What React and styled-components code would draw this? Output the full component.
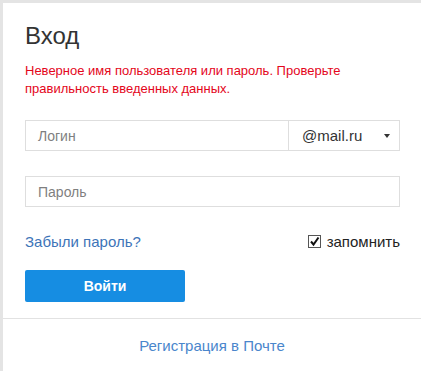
import React from "react";
import styled, { createGlobalStyle } from "styled-components";

const GlobalStyle = createGlobalStyle`
  html, body {
    margin: 0;
    padding: 0;
    background: #e4e4e4;
    font-family: "Liberation Sans", Arial, sans-serif;
  }
`;

const Card = styled.div`
  margin: 3px 0 0 3px;
  width: 418px;
  height: 368px;
  background: #fff;
  display: flex;
  flex-direction: column;
`;

const Body = styled.div`
  padding: 19px 21px 0 22px;
  display: flex;
  flex-direction: column;
`;

const Title = styled.h1`
  margin: 0;
  font-size: 24px;
  font-weight: normal;
  line-height: 28px;
  color: #333;
`;

const Error = styled.p`
  margin: 12px 0 0;
  font-size: 13px;
  line-height: 18px;
  color: #e4061b;
`;

const Field = styled.div`
  display: flex;
  height: 31px;
  box-sizing: border-box;
  border: 1px solid #dedede;
  margin-top: ${(p) => p.$top}px;
`;

const Input = styled.div`
  flex: 1;
  display: flex;
  align-items: center;
  padding-left: 12px;
  font-size: 14px;
  color: #7f7f7f;
`;

const Domain = styled.div`
  width: 111px;
  border-left: 1px solid #dedede;
  display: flex;
  align-items: center;
  justify-content: space-between;
  padding: 0 9px 0 13px;
  box-sizing: border-box;
  font-size: 15px;
  color: #333;
`;

const Caret = styled.span`
  width: 0;
  height: 0;
  border-left: 3.5px solid transparent;
  border-right: 3.5px solid transparent;
  border-top: 4px solid #333;
`;

const Row = styled.div`
  display: flex;
  justify-content: space-between;
  align-items: center;
  margin-top: 24px;
  height: 20px;
`;

const Link = styled.a`
  font-size: 15px;
  color: #3d74b8;
  text-decoration: none;
`;

const Remember = styled.label`
  display: flex;
  align-items: center;
  gap: 6px;
  font-size: 15px;
  color: #222;
`;

const Box = styled.span`
  width: 11px;
  height: 11px;
  border: 1px solid #555;
  display: flex;
  align-items: center;
  justify-content: center;
`;

const Button = styled.button`
  margin-top: 19px;
  width: 160px;
  height: 32px;
  border: none;
  border-radius: 2px;
  background: #168de2;
  color: #fff;
  font-family: "Liberation Sans", Arial, sans-serif;
  font-size: 14px;
  font-weight: bold;
`;

const Footer = styled.div`
  margin-top: 16px;
  border-top: 1px solid #e2e2e2;
  display: flex;
  justify-content: center;
  padding-top: 18px;
`;

const FooterLink = styled.a`
  font-size: 15px;
  color: #4a86cc;
  text-decoration: none;
`;

export default function App() {
  return (
    <>
      <GlobalStyle />
      <Card>
        <Body>
          <Title>Вход</Title>
          <Error>
            Неверное имя пользователя или пароль. Проверьте
            <br />
            правильность введенных данных.
          </Error>
          <Field $top={22}>
            <Input>Логин</Input>
            <Domain>
              @mail.ru
              <Caret />
            </Domain>
          </Field>
          <Field $top={25}>
            <Input>Пароль</Input>
          </Field>
          <Row>
            <Link href="#">Забыли пароль?</Link>
            <Remember>
              <Box>
                <svg width="11" height="11" viewBox="0 0 11 11">
                  <path d="M2 5.5 L4.5 8.5 L9.5 1.5" fill="none" stroke="#111" strokeWidth="2" />
                </svg>
              </Box>
              запомнить
            </Remember>
          </Row>
          <Button>Войти</Button>
        </Body>
        <Footer>
          <FooterLink href="#">Регистрация в Почте</FooterLink>
        </Footer>
      </Card>
    </>
  );
}
